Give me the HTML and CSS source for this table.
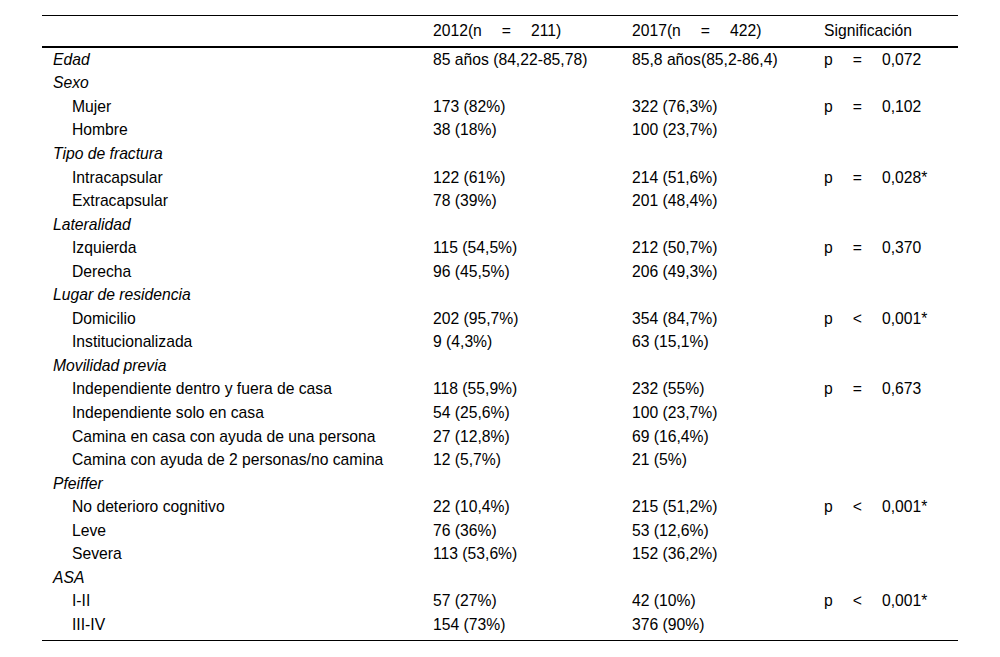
FILE: index.html
```html
<!DOCTYPE html>
<html lang="es">
<head>
<meta charset="utf-8">
<title>Tabla</title>
<link rel="stylesheet" href="styles.css">
</head>
<body>
<table class="data">
  <colgroup>
    <col class="c1"><col class="c2"><col class="c3"><col class="c4">
  </colgroup>
  <thead>
    <tr><th></th><th>2012(n<span class="op">=</span>211)</th><th>2017(n<span class="op">=</span>422)</th><th>Significación</th></tr>
  </thead>
  <tbody>
    <tr><td class="cat">Edad</td><td>85 años (84,22-85,78)</td><td>85,8 años(85,2-86,4)</td><td>p<span class="op">=</span>0,072</td></tr>
    <tr><td class="cat">Sexo</td><td></td><td></td><td></td></tr>
    <tr><td class="sub">Mujer</td><td>173 (82%)</td><td>322 (76,3%)</td><td>p<span class="op">=</span>0,102</td></tr>
    <tr><td class="sub">Hombre</td><td>38 (18%)</td><td>100 (23,7%)</td><td></td></tr>
    <tr><td class="cat">Tipo de fractura</td><td></td><td></td><td></td></tr>
    <tr><td class="sub">Intracapsular</td><td>122 (61%)</td><td>214 (51,6%)</td><td>p<span class="op">=</span>0,028*</td></tr>
    <tr><td class="sub">Extracapsular</td><td>78 (39%)</td><td>201 (48,4%)</td><td></td></tr>
    <tr><td class="cat">Lateralidad</td><td></td><td></td><td></td></tr>
    <tr><td class="sub">Izquierda</td><td>115 (54,5%)</td><td>212 (50,7%)</td><td>p<span class="op">=</span>0,370</td></tr>
    <tr><td class="sub">Derecha</td><td>96 (45,5%)</td><td>206 (49,3%)</td><td></td></tr>
    <tr><td class="cat">Lugar de residencia</td><td></td><td></td><td></td></tr>
    <tr><td class="sub">Domicilio</td><td>202 (95,7%)</td><td>354 (84,7%)</td><td>p<span class="op">&lt;</span>0,001*</td></tr>
    <tr><td class="sub">Institucionalizada</td><td>9 (4,3%)</td><td>63 (15,1%)</td><td></td></tr>
    <tr><td class="cat">Movilidad previa</td><td></td><td></td><td></td></tr>
    <tr><td class="sub">Independiente dentro y fuera de casa</td><td>118 (55,9%)</td><td>232 (55%)</td><td>p<span class="op">=</span>0,673</td></tr>
    <tr><td class="sub">Independiente solo en casa</td><td>54 (25,6%)</td><td>100 (23,7%)</td><td></td></tr>
    <tr><td class="sub">Camina en casa con ayuda de una persona</td><td>27 (12,8%)</td><td>69 (16,4%)</td><td></td></tr>
    <tr><td class="sub">Camina con ayuda de 2 personas/no camina</td><td>12 (5,7%)</td><td>21 (5%)</td><td></td></tr>
    <tr><td class="cat">Pfeiffer</td><td></td><td></td><td></td></tr>
    <tr><td class="sub">No deterioro cognitivo</td><td>22 (10,4%)</td><td>215 (51,2%)</td><td>p<span class="op">&lt;</span>0,001*</td></tr>
    <tr><td class="sub">Leve</td><td>76 (36%)</td><td>53 (12,6%)</td><td></td></tr>
    <tr><td class="sub">Severa</td><td>113 (53,6%)</td><td>152 (36,2%)</td><td></td></tr>
    <tr><td class="cat">ASA</td><td></td><td></td><td></td></tr>
    <tr><td class="sub">I-II</td><td>57 (27%)</td><td>42 (10%)</td><td>p<span class="op">&lt;</span>0,001*</td></tr>
    <tr class="last"><td class="sub">III-IV</td><td>154 (73%)</td><td>376 (90%)</td><td></td></tr>
  </tbody>
</table>
</body>
</html>
```
FILE: styles.css
```css
html, body {
  margin: 0;
  padding: 0;
  background: #fff;
}
body {
  font-family: "Liberation Sans", Arial, sans-serif;
  font-size: 15.7px;
  color: #000;
}
.data {
  margin: 15px 0 0 42px;
  width: 916px;
  border-collapse: collapse;
  table-layout: fixed;
  border-top: 1px solid #000;
  border-bottom: 1px solid #000;
}
.c1 { width: 380px; }
.c2 { width: 199px; }
.c3 { width: 192px; }
.c4 { width: 145px; }
.data th {
  font-weight: normal;
  text-align: left;
  padding: 7px 11px;
  line-height: 16px;
  height: 16px;
  border-bottom: 2px solid #000;
  white-space: nowrap;
}
.data td {
  padding: 0 11px;
  height: 23.55px;
  line-height: 16px;
  vertical-align: middle;
  white-space: nowrap;
}
.data td.cat {
  font-style: italic;
}
.data td.sub {
  padding-left: 30px;
}
.data tr.last td {
  padding-bottom: 3px;
}
.op {
  display: inline-block;
  margin: 0 20px;
}
```
